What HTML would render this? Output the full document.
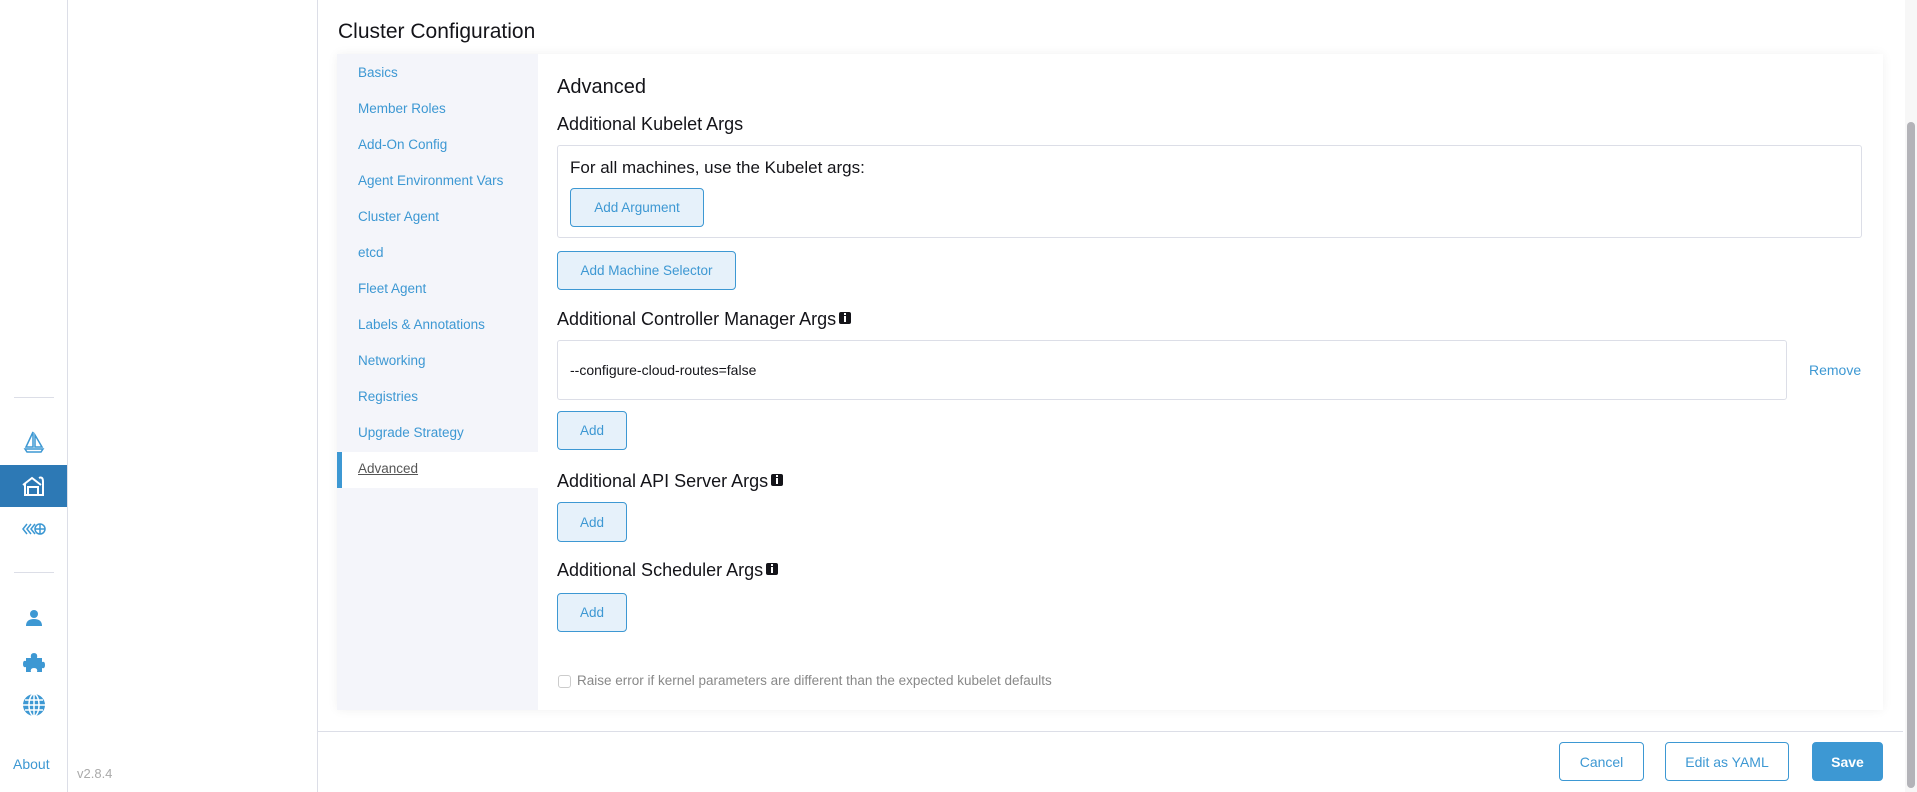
<!DOCTYPE html>
<html><head><meta charset="utf-8"><style>
*{box-sizing:border-box;margin:0;padding:0}
body{width:1917px;height:792px;overflow:hidden;background:#fff;font-family:"Liberation Sans",sans-serif;position:relative;color:#141419}
.a{position:absolute}
.lnk{color:#3d98d3}
.btn{position:absolute;background:#e6f1fa;border:1px solid #3d98d3;border-radius:4px;color:#3d98d3;font-size:13.5px;display:flex;align-items:center;justify-content:center}
.tab{position:absolute;left:358px;font-size:13.5px;color:#3d98d3}
h3{position:absolute;left:557px;font-size:18px;font-weight:normal;color:#141419;white-space:nowrap}
.info{display:inline-block;width:12px;height:12px;background:#141419;border-radius:2px;margin-left:3px;vertical-align:1px;position:relative}
.info:after{content:"";position:absolute;left:5px;top:4px;width:2px;height:6px;background:#fff}
.info:before{content:"";position:absolute;left:5px;top:1px;width:2px;height:2px;background:#fff}
</style></head><body>
<!-- left nav -->
<div class="a" style="left:67px;top:0;width:1px;height:792px;background:#dcdee7"></div>
<div class="a" style="left:317px;top:0;width:1px;height:792px;background:#dcdee7"></div>
<div class="a" style="left:14px;top:397px;width:40px;height:1px;background:#dcdee7"></div>
<div class="a" style="left:14px;top:572px;width:40px;height:1px;background:#dcdee7"></div>
<svg class="a" style="left:22px;top:430px" width="24" height="24" viewBox="0 0 24 24" fill="none" stroke="#3d98d3" stroke-width="1.5"><path d="M11 2 L4 17 H11 Z M13 5 L20 17 H13 Z M3 19 H21 L19 22 H5 Z"/></svg>
<div class="a" style="left:0;top:465px;width:67px;height:42px;background:#2d79b5"></div>
<svg class="a" style="left:21px;top:474px" width="26" height="24" viewBox="0 0 26 24" fill="none" stroke="#fff" stroke-width="2"><path d="M2 11 L11 4 L20 11 M4 10 V21 H22 V8 M18 4 Q22 2 22 8 M7 21 V13 H17 V21"/></svg>
<svg class="a" style="left:21px;top:522px" width="26" height="14" viewBox="0 0 26 14" fill="none" stroke="#3d98d3" stroke-width="1.5"><path d="M6 2 L2 7 L6 12 M10 2 L6 7 L10 12 M14 2 L10 7 L14 12"/><circle cx="19" cy="7" r="5"/><path d="M14 7 H24 M19 2 V12"/></svg>
<svg class="a" style="left:24px;top:608px" width="20" height="20" viewBox="0 0 20 20" fill="#3d98d3"><circle cx="10" cy="6" r="4"/><path d="M2 18 Q2 11 10 11 Q18 11 18 18 Z"/></svg>
<svg class="a" style="left:23px;top:651px" width="22" height="22" viewBox="0 0 22 22" fill="#3d98d3"><path d="M3 7 H8 Q7 2 11 2 Q15 2 14 7 H19 V11 Q22 10 22 14 Q22 18 19 17 V21 H14 Q15 17 11 17 Q7 17 8 21 H3 V16 Q0 17 0 13 Q0 9 3 10 Z"/></svg>
<svg class="a" style="left:22px;top:693px" width="24" height="24" viewBox="0 0 24 24"><circle cx="12" cy="12" r="11" fill="#3d98d3"/><g stroke="#fff" stroke-width="1.5" fill="none"><ellipse cx="12" cy="12" rx="5" ry="11"/><path d="M12 1 V23 M1 12 H23 M3 7 H21 M3 17 H21"/></g></svg>
<div class="a lnk" style="left:13px;top:756px;font-size:14px">About</div>
<div class="a" style="left:77px;top:766px;font-size:13px;color:#aaa">v2.8.4</div>
<!-- title -->
<div class="a" style="left:338px;top:20px;font-size:21px">Cluster Configuration</div>
<!-- card -->
<div class="a" style="left:337px;top:54px;width:1546px;height:656px;background:#fff;box-shadow:0 0 10px rgba(0,0,0,0.06)"></div>
<div class="a" style="left:337px;top:54px;width:201px;height:656px;background:#f4f5fa"></div>
<div class="tab" style="top:65px">Basics</div>
<div class="tab" style="top:101px">Member Roles</div>
<div class="tab" style="top:137px">Add-On Config</div>
<div class="tab" style="top:173px">Agent Environment Vars</div>
<div class="tab" style="top:209px">Cluster Agent</div>
<div class="tab" style="top:245px">etcd</div>
<div class="tab" style="top:281px">Fleet Agent</div>
<div class="tab" style="top:317px">Labels &amp; Annotations</div>
<div class="tab" style="top:353px">Networking</div>
<div class="tab" style="top:389px">Registries</div>
<div class="tab" style="top:425px">Upgrade Strategy</div>
<div class="a" style="left:337px;top:452px;width:201px;height:36px;background:#fff;border-left:5px solid #3d98d3"></div>
<div class="tab" style="top:461px;color:#555;text-decoration:underline">Advanced</div>
<!-- content -->
<div class="a" style="left:557px;top:76px;font-size:20px">Advanced</div>
<h3 style="top:114px">Additional Kubelet Args</h3>
<div class="a" style="left:557px;top:145px;width:1305px;height:93px;border:1px solid #dcdee7;border-radius:3px"></div>
<div class="a" style="left:570px;top:158px;font-size:17px">For all machines, use the Kubelet args:</div>
<div class="btn" style="left:570px;top:188px;width:134px;height:39px">Add Argument</div>
<div class="btn" style="left:557px;top:251px;width:179px;height:39px">Add Machine Selector</div>
<h3 style="top:309px">Additional Controller Manager Args<span class="info"></span></h3>
<div class="a" style="left:557px;top:340px;width:1230px;height:60px;border:1px solid #dcdee7;border-radius:3px"></div>
<div class="a" style="left:570px;top:362px;font-size:14px">--configure-cloud-routes=false</div>
<div class="a lnk" style="left:1809px;top:362px;font-size:14px">Remove</div>
<div class="btn" style="left:557px;top:411px;width:70px;height:39px">Add</div>
<h3 style="top:471px">Additional API Server Args<span class="info"></span></h3>
<div class="btn" style="left:557px;top:502px;width:70px;height:40px">Add</div>
<h3 style="top:560px">Additional Scheduler Args<span class="info"></span></h3>
<div class="btn" style="left:557px;top:593px;width:70px;height:39px">Add</div>
<div class="a" style="left:558px;top:675px;width:13px;height:13px;border:1px solid #ccc;border-radius:3px"></div>
<div class="a" style="left:577px;top:673px;font-size:13.5px;color:#888">Raise error if kernel parameters are different than the expected kubelet defaults</div>
<!-- footer -->
<div class="a" style="left:318px;top:731px;width:1585px;height:1px;background:#dcdee7"></div>
<div class="btn" style="left:1559px;top:742px;width:85px;height:39px;background:#fff;font-size:14px">Cancel</div>
<div class="btn" style="left:1665px;top:742px;width:124px;height:39px;background:#fff;font-size:14px">Edit as YAML</div>
<div class="btn" style="left:1812px;top:742px;width:71px;height:39px;background:#3d98d3;color:#fff;font-size:14px;font-weight:bold">Save</div>
<!-- scrollbar -->
<div class="a" style="left:1905px;top:0;width:12px;height:792px;background:#f7f7f7"></div>
<div class="a" style="left:1907px;top:122px;width:8px;height:666px;background:#b3b3b8;border-radius:4px"></div>
</body></html>
